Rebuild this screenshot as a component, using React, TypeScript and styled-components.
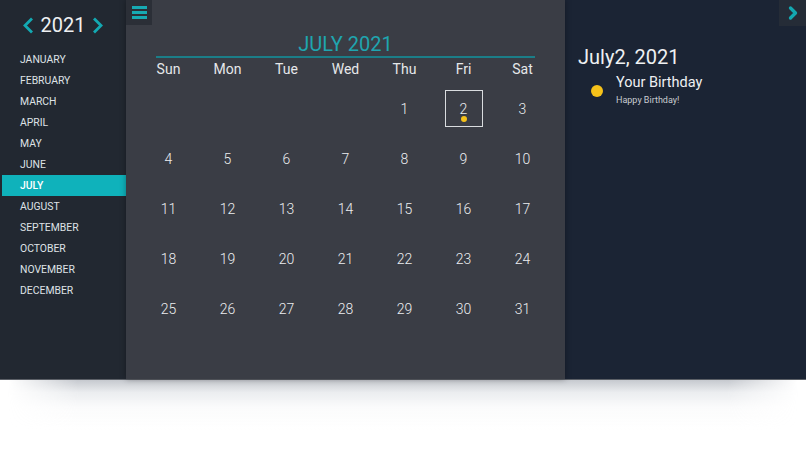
import React from 'react';
import styled, { createGlobalStyle } from 'styled-components';
import { ChevronRight } from 'lucide-react';

const GlobalStyle = createGlobalStyle`
  body {
    margin: 0;
    background: #ffffff;
    font-family: Roboto, "Liberation Sans", sans-serif;
  }
`;

const MONTHS = [
  'JANUARY', 'FEBRUARY', 'MARCH', 'APRIL', 'MAY', 'JUNE',
  'JULY', 'AUGUST', 'SEPTEMBER', 'OCTOBER', 'NOVEMBER', 'DECEMBER',
];
const WEEKDAYS = ['Sun', 'Mon', 'Tue', 'Wed', 'Thu', 'Fri', 'Sat'];

// July 2021 starts on a Thursday
const buildWeeks = () => {
  const cells: (number | null)[] = [null, null, null, null];
  for (let d = 1; d <= 31; d++) cells.push(d);
  const weeks: (number | null)[][] = [];
  for (let i = 0; i < cells.length; i += 7) weeks.push(cells.slice(i, i + 7));
  return weeks;
};

const Arrow = ({ dir }: { dir: 'left' | 'right' }) => (
  <svg width="12" height="17" viewBox="0 0 12 17">
    <polyline
      points={dir === 'left' ? '10,1.5 3,8.5 10,15.5' : '2,1.5 9,8.5 2,15.5'}
      fill="none"
      stroke="#13a9b2"
      strokeWidth="2.8"
    />
  </svg>
);

const App = () => {
  const weeks = buildWeeks();
  const selected = 2;
  const eventDays = [2];

  return (
    <>
      <GlobalStyle />
      <Page>
        <Shell>
          <Sidebar>
            <YearRow>
              <Arrow dir="left" />
              <Year>2021</Year>
              <Arrow dir="right" />
            </YearRow>
            <MonthList>
              {MONTHS.map((m) => (
                <MonthItem key={m} $active={m === 'JULY'}>
                  {m}
                </MonthItem>
              ))}
            </MonthList>
          </Sidebar>

          <Main>
            <MenuButton>
              <Bar />
              <Bar />
              <Bar />
            </MenuButton>
            <Calendar>
              <Title>JULY 2021</Title>
              <Grid>
                {WEEKDAYS.map((w) => (
                  <WeekDay key={w}>{w}</WeekDay>
                ))}
                {weeks.flat().map((d, i) => (
                  <DayCell key={i}>
                    {d !== null && (
                      <DayBox $selected={d === selected}>
                        <span>{d}</span>
                        {eventDays.includes(d) && <Dot />}
                      </DayBox>
                    )}
                  </DayCell>
                ))}
              </Grid>
            </Calendar>
          </Main>

          <Details>
            <CornerButton>
              <ChevronRight size={20} strokeWidth={4} color="#13a9b2" />
            </CornerButton>
            <DateHeading>July2, 2021</DateHeading>
            <EventRow>
              <EventDot />
              <div>
                <EventTitle>Your Birthday</EventTitle>
                <EventNote>Happy Birthday!</EventNote>
              </div>
            </EventRow>
          </Details>
        </Shell>
        <ShadowStrip />
      </Page>
    </>
  );
};

export default App;

const Page = styled.div`
  display: flex;
  flex-direction: column;
`;

const Shell = styled.div`
  display: flex;
  height: 380px;
  border-bottom: 1px solid #5b5f66;
  box-sizing: border-box;
`;

const ShadowStrip = styled.div`
  height: 50px;
  margin: 0 8px;
  background: linear-gradient(
    to bottom,
    rgba(150, 156, 166, 0.55) 0%,
    rgba(190, 196, 204, 0.3) 25%,
    rgba(220, 224, 228, 0.12) 55%,
    rgba(255, 255, 255, 0) 100%
  );
  -webkit-mask-image: linear-gradient(to right, transparent 0, #000 70px, #000 calc(100% - 70px), transparent 100%);
  mask-image: linear-gradient(to right, transparent 0, #000 70px, #000 calc(100% - 70px), transparent 100%);
`;

const Sidebar = styled.div`
  width: 126px;
  flex-shrink: 0;
  background-color: #222831;
  display: flex;
  flex-direction: column;
`;

const YearRow = styled.div`
  display: flex;
  align-items: center;
  justify-content: center;
  gap: 7px;
  height: 26px;
  margin-top: 12px;
`;

const Year = styled.div`
  color: #eef0f2;
  font-size: 20px;
  line-height: 24px;
`;

const MonthList = styled.div`
  display: flex;
  flex-direction: column;
  margin-top: 11px;
  padding-left: 2px;
`;

const MonthItem = styled.div<{ $active?: boolean }>`
  height: 21px;
  line-height: 21px;
  padding-left: 18px;
  font-size: 10.4px;
  color: #dfe2e6;
  background-color: ${({ $active }) => ($active ? '#0fb2bb' : 'transparent')};
  font-weight: ${({ $active }) => ($active ? 500 : 400)};
  ${({ $active }) => $active && 'color: #ffffff;'}
`;

const Main = styled.div`
  position: relative;
  width: 439px;
  flex-shrink: 0;
  background-color: #3a3d45;
  box-shadow: 0 0 6px rgba(0, 0, 0, 0.35);
  z-index: 1;
`;

const MenuButton = styled.div`
  position: absolute;
  top: 0;
  left: 0;
  width: 26px;
  height: 25px;
  background-color: #2b2f37;
  display: flex;
  flex-direction: column;
  align-items: center;
  justify-content: center;
  gap: 2px;
`;

const Bar = styled.div`
  width: 15px;
  height: 3px;
  background-color: #17aab3;
`;

const Calendar = styled.div`
  width: 413px;
  margin: 0 auto;
  padding-top: 32px;
`;

const Title = styled.div`
  width: 379px;
  margin: 0 auto;
  text-align: center;
  color: #1fa5af;
  font-size: 20px;
  line-height: 24px;
  border-bottom: 2px solid #1b7e88;
`;

const Grid = styled.div`
  display: grid;
  grid-template-columns: repeat(7, 1fr);
  grid-auto-rows: 50px;
  grid-template-rows: 25px;
`;

const WeekDay = styled.div`
  display: flex;
  align-items: center;
  justify-content: center;
  color: #e6e8ea;
  font-size: 14px;
  padding-bottom: 3px;
`;

const DayCell = styled.div`
  display: flex;
  align-items: center;
  justify-content: center;
  color: #eceef0;
  font-size: 14px;
  font-weight: 300;
  padding-top: 1px;
`;

const DayBox = styled.div<{ $selected?: boolean }>`
  width: 38px;
  height: 37px;
  box-sizing: border-box;
  display: flex;
  flex-direction: column;
  align-items: center;
  justify-content: center;
  border: ${({ $selected }) => ($selected ? '1.5px solid #d9dcdf' : '1.5px solid transparent')};
  position: relative;
`;

const Dot = styled.div`
  position: absolute;
  left: 50%;
  top: 25px;
  width: 6px;
  height: 6px;
  margin-left: -3px;
  border-radius: 50%;
  background-color: #f6c21a;
`;

const Details = styled.div`
  position: relative;
  flex: 1;
  background-color: #1b2434;
  padding: 45px 13px 0;
`;

const CornerButton = styled.div`
  position: absolute;
  top: 0;
  right: 0;
  width: 27px;
  height: 26px;
  background-color: #252c37;
  display: flex;
  align-items: center;
  justify-content: center;
`;

const DateHeading = styled.div`
  color: #eef0f2;
  font-size: 20px;
  line-height: 24px;
`;

const EventRow = styled.div`
  display: flex;
  align-items: flex-start;
  gap: 13px;
  margin-top: 5px;
  padding-left: 13px;
`;

const EventDot = styled.div`
  width: 12px;
  height: 12px;
  border-radius: 50%;
  background-color: #f6c21a;
  margin-top: 11px;
  flex-shrink: 0;
`;

const EventTitle = styled.div`
  color: #eef0f2;
  font-size: 14.5px;
  line-height: 18px;
`;

const EventNote = styled.div`
  color: #c9ccd1;
  font-size: 9px;
  line-height: 12px;
  margin-top: 2px;
`;
